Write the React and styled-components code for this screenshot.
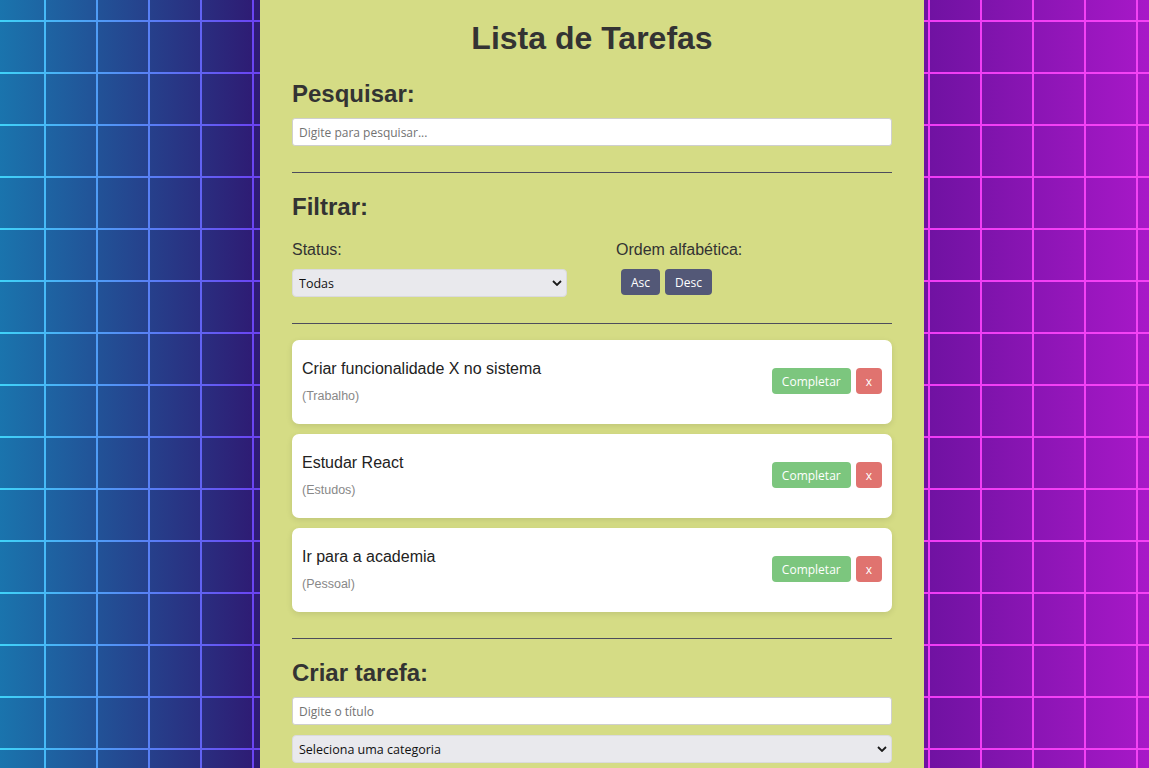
import React from 'react'
import styled, { createGlobalStyle } from 'styled-components'

const GlobalStyle = createGlobalStyle`
    * {
        box-sizing: border-box;
    }
    body {
        margin: 0;
        font-family: "Liberation Sans", Arial, sans-serif;
        color: #333;
    }
`

// fundo: gradiente escuro nas celulas, gradiente claro nas linhas da grade
const Page = styled.div`
    height: 100vh;
    overflow: hidden;
    display: grid;
    grid-template-columns: 260px 664px 1fr;
    background-image:
        linear-gradient(to right, #1a74ad 0%, #2e1c74 22%, #7012a2 81%, #a818c8 100%),
        conic-gradient(from 90deg at 2px 2px, #000 25%, #fff 0),
        linear-gradient(to right, #3fd3f8 0%, #6a45f2 22%, #f03cf5 81%, #f542f5 100%);
    background-size: 100% 100%, 52px 52px, 100% 100%;
    background-position: 0 0, 44px 20px, 0 0;
    background-blend-mode: lighten, multiply, normal;
`

const Panel = styled.main`
    grid-column: 2;
    background: #d5dc85;
    padding: 20px 32px;
    min-height: 100%;
`

const Title = styled.h1`
    margin: 0 0 23px;
    text-align: center;
    font-size: 32px;
    line-height: 37px;
    color: #333;
`

const SectionTitle = styled.h2`
    margin: 0 0 ${props => props.$gap || 10}px;
    font-size: 24px;
    line-height: 28px;
    color: #333;
`

const Divider = styled.hr`
    border: none;
    border-top: 1px solid #4d4d5c;
    margin: 26px 0 ${props => props.$bottom || 20}px;
`

const TextInput = styled.input`
    display: block;
    width: 100%;
    height: 28px;
    padding: 0 6px;
    border: 1px solid #cfcfcf;
    border-radius: 3px;
    background: #fff;
    font-family: "Open Sans", sans-serif;
    font-size: 12px;
    color: #222;
    margin-bottom: ${props => props.$gap || 0}px;

    &::placeholder {
        color: #727272;
    }
`

const SelectWrap = styled.div`
    position: relative;
    width: ${props => props.$width || '100%'};
`

const Select = styled.select`
    display: block;
    width: 100%;
    height: 28px;
    padding: 0 6px;
    appearance: none;
    border: 1px solid #dadade;
    border-radius: 4px;
    background: #e9e9ed;
    font-family: "Open Sans", sans-serif;
    font-size: 12.5px;
    color: #111;
`

const Chevron = styled.svg`
    position: absolute;
    right: 5px;
    top: 11px;
    pointer-events: none;
`

const FilterRow = styled.div`
    display: grid;
    grid-template-columns: 324px 1fr;
`

const Label = styled.div`
    font-size: 16px;
    line-height: 18px;
    color: #333;
    margin-bottom: 10px;
`

const ButtonRow = styled.div`
    display: flex;
    gap: 5px;
    padding-left: ${props => props.$indent || 0}px;
`

const Button = styled.button`
    height: 26px;
    padding: 0 10px;
    border: none;
    border-radius: 4px;
    background: ${props => props.$bg || '#535877'};
    color: #fff;
    font-family: "Open Sans", sans-serif;
    font-size: 12px;
    cursor: pointer;
`

const TaskList = styled.div`
    display: flex;
    flex-direction: column;
    gap: 10px;
`

const TaskCard = styled.div`
    display: flex;
    align-items: center;
    justify-content: space-between;
    height: 84px;
    padding: 0 10px 2px;
    background: #fff;
    border-radius: 7px;
    box-shadow: 0 2px 6px rgba(0, 0, 0, 0.1);
`

const TaskTitle = styled.div`
    font-size: 16px;
    line-height: 18px;
    color: #222;
`

const TaskCategory = styled.div`
    margin-top: 11px;
    font-size: 12.5px;
    line-height: 14px;
    color: #888;
`

const tarefas = [
    { id: 1, titulo: 'Criar funcionalidade X no sistema', categoria: 'Trabalho' },
    { id: 2, titulo: 'Estudar React', categoria: 'Estudos' },
    { id: 3, titulo: 'Ir para a academia', categoria: 'Pessoal' },
]

const ChevronIcon = () => (
    <Chevron width="10" height="6" viewBox="0 0 10 6">
        <path d="M1 1 L5 5 L9 1" fill="none" stroke="#1a1a1a" strokeWidth="1.8" />
    </Chevron>
)

const App = () => {
    return (
        <Page>
            <GlobalStyle />
            <Panel>
                <Title>Lista de Tarefas</Title>

                <SectionTitle>Pesquisar:</SectionTitle>
                <TextInput placeholder="Digite para pesquisar..." />

                <Divider />

                <SectionTitle $gap={20}>Filtrar:</SectionTitle>
                <FilterRow>
                    <div>
                        <Label>Status:</Label>
                        <SelectWrap $width="275px">
                            <Select defaultValue="todas">
                                <option value="todas">Todas</option>
                                <option value="completas">Completas</option>
                                <option value="incompletas">Incompletas</option>
                            </Select>
                            <ChevronIcon />
                        </SelectWrap>
                    </div>
                    <div>
                        <Label>Ordem alfabética:</Label>
                        <ButtonRow $indent={5}>
                            <Button>Asc</Button>
                            <Button>Desc</Button>
                        </ButtonRow>
                    </div>
                </FilterRow>

                <Divider $bottom={16} />

                <TaskList>
                    {tarefas.map(tarefa => (
                        <TaskCard key={tarefa.id}>
                            <div>
                                <TaskTitle>{tarefa.titulo}</TaskTitle>
                                <TaskCategory>({tarefa.categoria})</TaskCategory>
                            </div>
                            <ButtonRow>
                                <Button $bg="#7cc67e">Completar</Button>
                                <Button $bg="#e0736f">x</Button>
                            </ButtonRow>
                        </TaskCard>
                    ))}
                </TaskList>

                <Divider />

                <SectionTitle>Criar tarefa:</SectionTitle>
                <TextInput placeholder="Digite o título" $gap={10} />
                <SelectWrap>
                    <Select defaultValue="">
                        <option value="">Seleciona uma categoria</option>
                        <option value="Trabalho">Trabalho</option>
                        <option value="Pessoal">Pessoal</option>
                        <option value="Estudos">Estudos</option>
                    </Select>
                    <ChevronIcon />
                </SelectWrap>
            </Panel>
        </Page>
    )
}

export default App
